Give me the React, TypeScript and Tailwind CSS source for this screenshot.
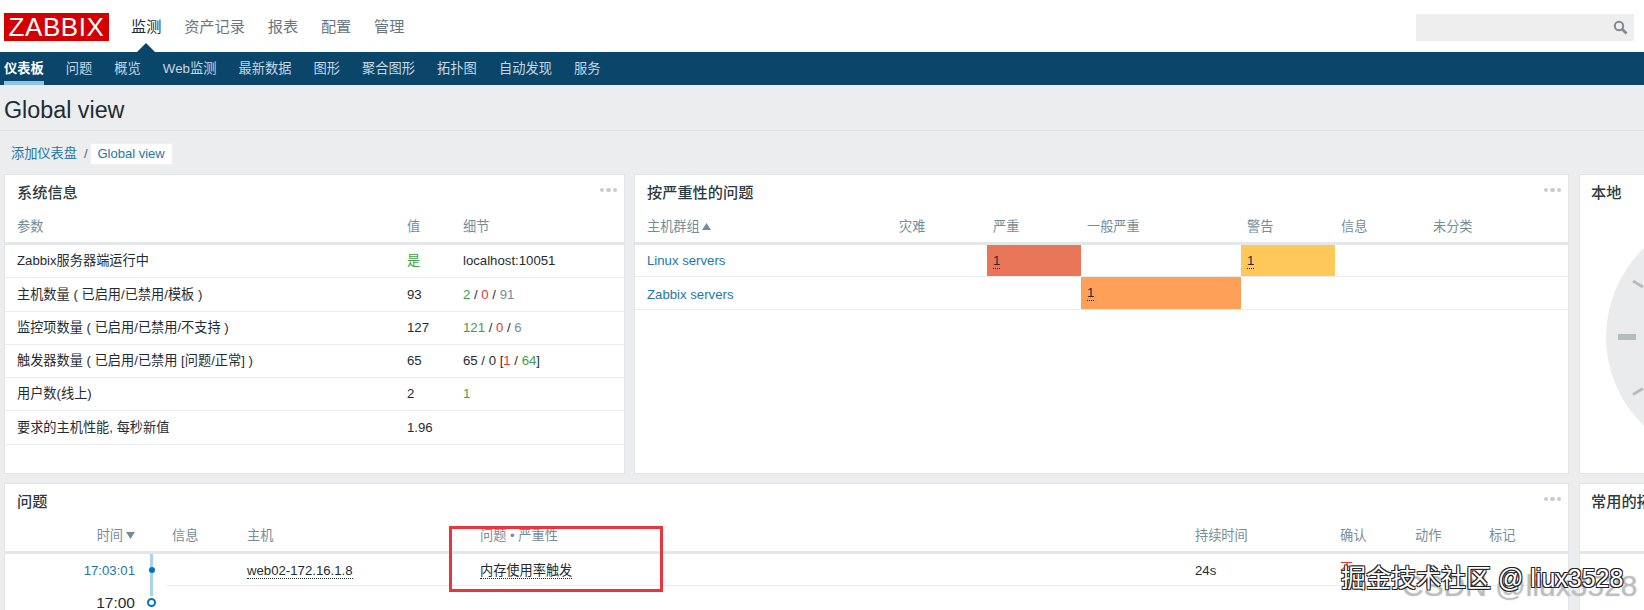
import React from "react";

const Dots = () => (
  <div className="flex gap-[2px] ml-auto mt-[-6px]">
    <span className="w-[4.5px] h-[4.5px] rounded-full bg-[#c9cdd0]" />
    <span className="w-[4.5px] h-[4.5px] rounded-full bg-[#c9cdd0]" />
    <span className="w-[4.5px] h-[4.5px] rounded-full bg-[#c9cdd0]" />
  </div>
);

const Title = ({ text, dots = true }: { text: string; dots?: boolean }) => (
  <div className={`h-[34px] flex items-center ${dots ? "pl-[12px]" : "pl-[11px]"} pr-[7px] pt-[2px] text-[15.2px] font-medium text-[#2c3a41] shrink-0 whitespace-nowrap`}>
    <span>{text}</span>
    {dots && <Dots />}
  </div>
);

const Dotted = ({ children }: { children: React.ReactNode }) => (
  <span className="border-b border-dotted border-[#1f2c33] leading-[15px] inline-block">{children}</span>
);

const G = ({ children }: { children: React.ReactNode }) => <span className="text-[#429e47]">{children}</span>;
const R = ({ children }: { children: React.ReactNode }) => <span className="text-[#e33734]">{children}</span>;
const S = ({ children }: { children: React.ReactNode }) => <span className="text-[#768d99]">{children}</span>;

const sysRows: [React.ReactNode, React.ReactNode, React.ReactNode][] = [
  ["Zabbix服务器端运行中", <G>是</G>, "localhost:10051"],
  ["主机数量 ( 已启用/已禁用/模板 )", "93", <><G>2</G> / <R>0</R> / <S>91</S></>],
  ["监控项数量 ( 已启用/已禁用/不支持 )", "127", <><G>121</G> / <R>0</R> / <S>6</S></>],
  ["触发器数量 ( 已启用/已禁用 [问题/正常] )", "65", <>65 / 0 [<R>1</R> / <G>64</G>]</>],
  ["用户数(线上)", "2", <G>1</G>],
  ["要求的主机性能, 每秒新值", "1.96", ""],
];

const topNav = ["资产记录", "报表", "配置", "管理"];
const subNav = ["问题", "概览", "Web监测", "最新数据", "图形", "聚合图形", "拓扑图", "自动发现", "服务"];
const sevCols = "grid grid-cols-[258px_94px_94px_160px_94px_92px_1fr]";
const probCols = "grid grid-cols-[130px_31px_75px_233px_715px_145px_75px_74px_1fr]";

const Clock = () => (
  <svg width="246" height="246" viewBox="0 0 246 246" className="block">
    <circle cx="123" cy="123" r="123" fill="#e9ebec" />
    <rect x="12" y="120" width="18" height="6" fill="#b3bdbf" />
    <line x1="27" y1="67" x2="37" y2="73" stroke="#b3bdbf" strokeWidth="3" />
    <line x1="27" y1="180.5" x2="37" y2="174.5" stroke="#b3bdbf" strokeWidth="3" />
  </svg>
);

export default function App() {
  return (
    <div className="relative w-[1644px] h-[610px] overflow-hidden bg-[#ebedef] text-[13.2px] text-[#1f2c33] [font-family:'Liberation_Sans','Noto_Sans_CJK_SC',sans-serif]">
      {/* top bar */}
      <div className="relative h-[52px] bg-white flex items-center pl-[4px] pt-[2px]">
        <div className="w-[105px] h-[28px] bg-[#d40000] flex items-center justify-center text-white text-[26px] tracking-[0.6px] leading-none">
          ZABBIX
        </div>
        <div className="ml-[22px] flex gap-[22.8px] text-[15.2px] text-[#69767d]">
          <span className="text-[#1f2c33]">监测</span>
          {topNav.map((t) => (
            <span key={t}>{t}</span>
          ))}
        </div>
        <div className="ml-auto mr-[10px] w-[218px] h-[27px] bg-[#eeeeee] flex items-center justify-end pr-[6px]">
          <svg width="15" height="15" viewBox="0 0 15 15" fill="none" stroke="#808a8f" strokeWidth="2">
            <circle cx="6" cy="6" r="4.2" />
            <line x1="9" y1="9" x2="13.5" y2="13.5" strokeWidth="2.6" />
          </svg>
        </div>
        <div className="absolute left-[137px] bottom-0 w-0 h-0 border-x-[9.5px] border-b-[9px] border-x-transparent border-b-[#0a466a]" />
      </div>

      {/* sub nav */}
      <div className="h-[33px] bg-[#0a466a] flex pl-[4px] gap-[22px] text-[13.28px] text-[#c5d8e4]">
        <span className="h-full flex items-center text-white font-bold shadow-[inset_0_-4px_0_#8cc4e8]">仪表板</span>
        {subNav.map((t) => (
          <span key={t} className="h-full flex items-center">
            {t}
          </span>
        ))}
      </div>

      {/* title */}
      <div className="h-[46px] border-b border-[#dfe3e6] flex items-center pl-[4px] pt-[5px] text-[23.3px] text-[#1f2c33]">Global view</div>

      {/* breadcrumb */}
      <div className="h-[43px] flex items-center pl-[11px] pt-[2px] text-[#1f76a8]">
        <span>添加仪表盘</span>
        <span className="ml-[7px] mr-[1px] text-[#55656e]">/</span>
        <span className="ml-[1px] w-[83px] h-[22px] bg-white border border-[#eef0f2] flex items-center justify-center text-[13px]">Global view</span>
      </div>

      {/* first row */}
      <div className="flex pl-[4px] h-[300px] w-[1900px]">
        <div className="w-[621px] bg-white border border-[#e1e5e8] flex flex-col">
          <Title text="系统信息" />
          <div className="h-[33px] pt-[2px] shrink-0 grid grid-cols-[390px_56px_1fr] items-center pl-[12px] text-[#768d99]">
            <span>参数</span>
            <span>值</span>
            <span>细节</span>
          </div>
          <div className="border-t-[3px] border-[#e4e7ea]">
            {sysRows.map((r, i) => (
              <div key={i} className="h-[33.3px] grid grid-cols-[390px_56px_1fr] items-center pl-[12px] border-b border-[#ebeef0] whitespace-nowrap">
                <span>{r[0]}</span>
                <span>{r[1]}</span>
                <span>{r[2]}</span>
              </div>
            ))}
          </div>
        </div>

        <div className="ml-[9px] w-[935px] bg-white border border-[#e1e5e8] flex flex-col">
          <Title text="按严重性的问题" />
          <div className={`${sevCols} h-[33px] pt-[2px] shrink-0 items-center text-[#768d99]`}>
            <span className="pl-[12px] flex items-center gap-[2px]">
              主机群组
              <svg width="9" height="7" viewBox="0 0 9 7"><polygon points="4.5,0 9,7 0,7" fill="#768d99" /></svg>
            </span>
            <span className="pl-[6px]">灾难</span>
            <span className="pl-[6px]">严重</span>
            <span className="pl-[6px]">一般严重</span>
            <span className="pl-[6px]">警告</span>
            <span className="pl-[6px]">信息</span>
            <span className="pl-[6px]">未分类</span>
          </div>
          <div className="border-t-[3px] border-[#e4e7ea]">
            <div className={`${sevCols} h-[32px] items-stretch border-b border-[#ebeef0]`}>
              <span className="pl-[12px] flex items-center text-[#1f76a8]">Linux servers</span>
              <span />
              <span className="pl-[6px] flex items-center bg-[#e97659]"><Dotted>1</Dotted></span>
              <span />
              <span className="pl-[6px] flex items-center bg-[#ffc859]"><Dotted>1</Dotted></span>
              <span />
              <span />
            </div>
            <div className={`${sevCols} h-[33px] items-stretch border-b border-[#ebeef0]`}>
              <span className="pl-[12px] pt-[3px] flex items-center text-[#1f76a8]">Zabbix servers</span>
              <span />
              <span />
              <span className="pl-[6px] flex items-center bg-[#ffa059]"><Dotted>1</Dotted></span>
              <span />
              <span />
              <span />
            </div>
          </div>
        </div>

        <div className="ml-[10px] w-[300px] bg-white border border-[#e1e5e8] overflow-hidden">
          <Title text="本地" dots={false} />
          <div className="pl-[26px] pt-[5px]">
            <Clock />
          </div>
        </div>
      </div>

      {/* second row */}
      <div className="flex gap-[10px] pl-[4px] mt-[9px] h-[200px] w-[1900px]">
        <div className="w-[1565px] bg-white border border-[#e1e5e8] flex flex-col">
          <Title text="问题" />
          <div className={`${probCols} h-[33px] pt-[2px] shrink-0 items-center text-[#768d99]`}>
            <span className="flex items-center justify-end gap-[3px]">
              时间
              <svg width="9" height="7" viewBox="0 0 9 7"><polygon points="0,0 9,0 4.5,7" fill="#768d99" /></svg>
            </span>
            <span />
            <span className="pl-[6px]">信息</span>
            <span className="pl-[6px]">主机</span>
            <span className="pl-[6px]">问题 • 严重性</span>
            <span className="pl-[6px]">持续时间</span>
            <span className="pl-[6px]">确认</span>
            <span className="pl-[6px]">动作</span>
            <span className="pl-[6px]">标记</span>
          </div>
          <div className="border-t-[3px] border-[#e4e7ea]">
            <div className={`${probCols} h-[32px]`}>
              <span className="flex items-center justify-end pt-[2px] text-[#1f76a8]">17:03:01</span>
              <span className="relative">
                <span className="absolute left-[15px] top-0 bottom-0 w-[3px] bg-[#a9d5ec]" />
                <span className="absolute left-[13.5px] top-[13px] w-[6px] h-[6px] rounded-full bg-[#0275b8]" />
              </span>
              <span className="border-b border-[#ebeef0]" />
              <span className="pl-[6px] pt-[2px] flex items-center border-b border-[#ebeef0]"><Dotted>web02-172.16.1.8</Dotted></span>
              <span className="pl-[6px] pt-[2px] flex items-center border-b border-[#ebeef0]"><Dotted>内存使用率触发</Dotted></span>
              <span className="pl-[6px] pt-[2px] flex items-center border-b border-[#ebeef0]">24s</span>
              <span className="pl-[6px] flex items-start border-b border-[#ebeef0] text-[#e33734] pt-[5px]">不</span>
              <span className="border-b border-[#ebeef0]" />
              <span className="border-b border-[#ebeef0]" />
            </div>
            <div className={`${probCols} h-[32px]`}>
              <span className="flex items-center justify-end pt-[2px] text-[15.5px]">17:00</span>
              <span className="relative">
                <span className="absolute left-[15px] top-0 h-[10px] w-[3px] bg-[#a9d5ec]" />
                <span className="absolute left-[12px] top-[12px] w-[9px] h-[9px] rounded-full border-2 border-[#0275b8] bg-white" />
              </span>
            </div>
          </div>
        </div>

        <div className="w-[300px] bg-white border border-[#e1e5e8]">
          <Title text="常用的拓扑图" dots={false} />
          <div className="h-[33px]" />
          <div className="border-t-[3px] border-[#e4e7ea]" />
        </div>
      </div>

      {/* annotation */}
      <div className="absolute left-[449px] top-[526px] w-[214px] h-[66px] border-[3px] border-[#e8363c]" />

      {/* watermarks */}
      <div className="absolute left-[1402px] top-[571px] text-[30px] leading-[30px] whitespace-nowrap text-white/40 [text-shadow:0_0_1px_#8a8f92]">CSDN @liux3528</div>
      <div className="absolute left-[1341px] top-[564px] text-[25px] leading-[28px] whitespace-nowrap text-white [text-shadow:1px_1px_0_#222,-1px_-1px_0_#222,1px_-1px_0_#222,-1px_1px_0_#222]">掘金技术社区 @ liux3528</div>
    </div>
  );
}
